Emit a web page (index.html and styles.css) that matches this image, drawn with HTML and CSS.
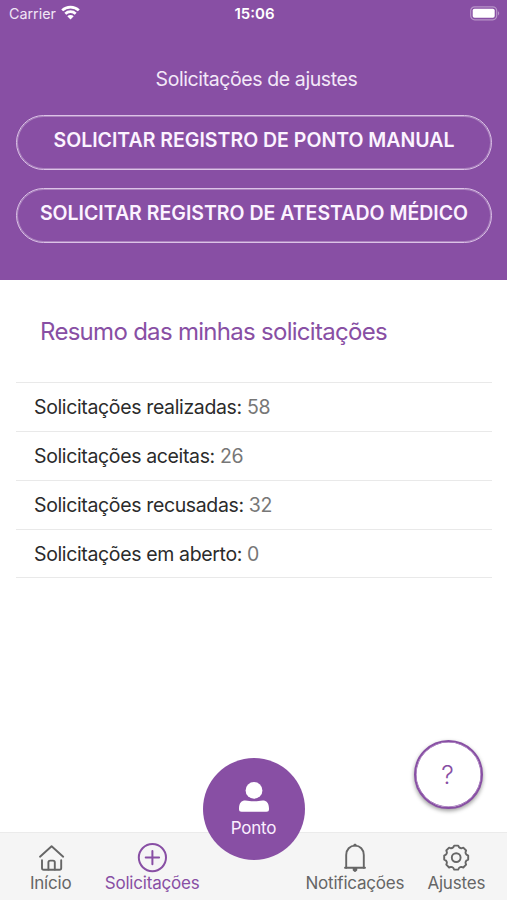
FILE: index.html
```
<!DOCTYPE html>
<html lang="pt-BR">
<head>
  <meta charset="UTF-8">
  <meta name="viewport" content="width=device-width, initial-scale=1">
  <title>Solicitações de ajustes</title>
  <link rel="stylesheet" href="styles.css">
</head>
<body>
  <header class="header">
    <div class="status-bar">
      <div class="carrier">
        <span class="carrier-name">Carrier</span>
        <svg class="wifi" width="19" height="15" viewBox="0 0 19 15">
          <g fill="none" stroke="#fff" stroke-width="2.7">
            <path d="M1.2 5.4C5.8 0.9 13.2 0.9 17.8 5.4"/>
            <path d="M4.3 8.8C7.2 6 11.8 6 14.7 8.8"/>
          </g>
          <path fill="#fff" d="M9.5 14.6L6.3 11.3C8 9.7 11 9.7 12.7 11.3Z"/>
        </svg>
      </div>
      <span class="clock">15:06</span>
      <svg class="battery" width="31" height="15" viewBox="0 0 31 15">
        <rect x="1.7" y="0.8" width="26" height="13" rx="4" fill="none" stroke="#b794c8" stroke-width="1.2"/>
        <rect x="3.7" y="2.8" width="22" height="9" rx="1.8" fill="#fff"/>
        <path fill="#b794c8" d="M29 5.2C30.6 5.8 30.6 8.8 29 9.4Z"/>
      </svg>
    </div>
    <h1 class="title">Solicitações de ajustes</h1>
    <div class="actions">
      <button class="action" type="button">SOLICITAR REGISTRO DE PONTO MANUAL</button>
      <button class="action" type="button">SOLICITAR REGISTRO DE ATESTADO MÉDICO</button>
    </div>
  </header>

  <main class="content">
    <h2 class="subtitle">Resumo das minhas solicitações</h2>
    <ul class="summary">
      <li>Solicitações realizadas: <span class="value">58</span></li>
      <li>Solicitações aceitas: <span class="value">26</span></li>
      <li>Solicitações recusadas: <span class="value">32</span></li>
      <li>Solicitações em aberto: <span class="value">0</span></li>
    </ul>
  </main>

  <button class="help" type="button">?</button>

  <nav class="tabs">
    <a class="tab">
      <svg width="30" height="30" viewBox="0 0 30 30" fill="none" stroke="currentColor" stroke-width="1.9" stroke-linecap="round" stroke-linejoin="round">
        <path d="M4 13.7L15.6 3.2L27.2 13.7"/>
        <path d="M6 17.3V25Q6 26.8 7.8 26.8H23.4Q25.2 26.8 25.2 25V17.3"/>
        <path d="M12.4 26.6V19.4Q12.4 17.6 14.2 17.6H17Q18.8 17.6 18.8 19.4V26.6"/>
      </svg>
      <span>Início</span>
    </a>
    <a class="tab active">
      <svg width="30" height="30" viewBox="0 0 30 30" fill="none" stroke="currentColor" stroke-width="2" stroke-linecap="round">
        <circle cx="15.4" cy="14.6" r="13.6"/>
        <path d="M15.4 7.9V21.3M8.7 14.6H22.1"/>
      </svg>
      <span>Solicitações</span>
    </a>
    <div class="tab tab-center">
      <a class="ponto">
        <svg width="30" height="30" viewBox="0 0 30 30" fill="#fff">
          <circle cx="15" cy="8.4" r="8.4"/>
          <path d="M0 26.5C0 21 2.5 18.4 6.3 18.4C9.5 18.4 11 19.3 15 19.3C19 19.3 20.5 18.4 23.7 18.4C27.5 18.4 30 21 30 26.5V27.3Q30 29.8 27.5 29.8H2.5Q0 29.8 0 27.3Z"/>
        </svg>
        <span>Ponto</span>
      </a>
    </div>
    <a class="tab">
      <svg width="30" height="30" viewBox="0 0 30 30" fill="none" stroke="currentColor" stroke-width="1.9" stroke-linecap="round" stroke-linejoin="round">
        <path d="M6.2 24.8V12C6.2 6.6 10 2.6 15 2.6C20 2.6 23.8 6.6 23.8 12V24.8"/>
        <path d="M5 24.8H25"/>
        <path fill="currentColor" d="M14.5 1.6H15.5V2.4H14.5ZM13.7 25.5H16.3V26.9L15 28L13.7 26.9Z"/>
      </svg>
      <span>Notificações</span>
    </a>
    <a class="tab">
      <svg width="30" height="30" viewBox="-15.2 -14.6 30 30" fill="none" stroke="currentColor" stroke-width="1.9" stroke-linejoin="round">
        <path d="M-2 -12H2L2.9 -10.3Q4 -9.3 5.2 -9.3L7.1 -9.9L9.9 -7.1L9.3 -5.2Q9.3 -4 10.3 -2.9L12 -2V2L10.3 2.9Q9.3 4 9.3 5.2L9.9 7.1L7.1 9.9L5.2 9.3Q4 9.3 2.9 10.3L2 12H-2L-2.9 10.3Q-4 9.3 -5.2 9.3L-7.1 9.9L-9.9 7.1L-9.3 5.2Q-9.3 4 -10.3 2.9L-12 2V-2L-10.3 -2.9Q-9.3 -4 -9.3 -5.2L-9.9 -7.1L-7.1 -9.9L-5.2 -9.3Q-4 -9.3 -2.9 -10.3Z"/>
        <circle r="4.4"/>
      </svg>
      <span>Ajustes</span>
    </a>
  </nav>
</body>
</html>
```
FILE: styles.css
```
* {
  box-sizing: border-box;
}

body {
  display: flex;
  flex-direction: column;
  height: 900px;
  margin: 0;
  background-color: #fff;
  color: #2b2b2b;
  font-family: Inter, "Liberation Sans", sans-serif;
  overflow: hidden;
}

button {
  font-family: inherit;
}

.header {
  height: 280px;
  padding: 0 15px 0 16px;
  background-color: #884fa4;
  color: #fff;
}

.status-bar {
  display: grid;
  grid-template-columns: 1fr auto 1fr;
  align-items: center;
  height: 28px;
  margin: 0 -8px 0 -7px;
}

.carrier {
  display: flex;
  align-items: center;
  gap: 5px;
  margin-top: -1px;
  color: #f1e5f6;
  font-size: 14.3px;
}

.wifi {
  margin-top: -2px;
}

.clock {
  margin-top: -1px;
  font-size: 15px;
  font-weight: 600;
}

.battery {
  justify-self: end;
  margin-top: -2px;
}

.title {
  margin: 38px 0 0;
  padding-left: 5px;
  color: #f3e8f8;
  font-size: 19.5px;
  font-weight: 400;
  letter-spacing: -0.4px;
  line-height: 27px;
  text-align: center;
}

.actions {
  display: flex;
  flex-direction: column;
  gap: 18px;
  margin-top: 22px;
}

.action {
  height: 55px;
  padding: 0 0 5px;
  border: 1px solid #dcc3e7;
  border-radius: 28px;
  background: none;
  box-shadow: inset 0 0 0 1px rgba(255, 255, 255, 0.3);
  color: #fcf3ff;
  font-size: 19.5px;
  font-weight: 600;
  white-space: nowrap;
}

.content {
  flex: 1;
  padding: 36px 15px 0 16px;
}

.subtitle {
  margin: 0 24px;
  color: #884fa4;
  font-size: 24px;
  font-weight: 400;
  letter-spacing: -0.71px;
  line-height: 32px;
}

.summary {
  margin: 34px 0 0;
  padding: 0;
  border-top: 1px solid #e9e9e9;
  list-style: none;
}

.summary li {
  height: 48.85px;
  padding-left: 18px;
  border-bottom: 1px solid #e9e9e9;
  font-size: 19.5px;
  letter-spacing: -0.36px;
  line-height: 49px;
}

.value {
  color: #777;
}

.help {
  position: absolute;
  top: 740px;
  left: 414px;
  width: 69px;
  height: 69px;
  padding: 0 2px 0 0;
  border: 2px solid #884fa4;
  border-radius: 50%;
  background-color: #fff;
  box-shadow: 0 2px 4px rgba(0, 0, 0, 0.4), inset 0 0 0 0.5px #884fa4;
  color: #884fa4;
  font-size: 25px;
  font-weight: 300;
}

.tabs {
  display: grid;
  grid-template-columns: repeat(5, 1fr);
  height: 68px;
  border-top: 1px solid #ebebeb;
  background-color: #f5f5f5;
}

.tab {
  display: flex;
  flex-direction: column;
  align-items: center;
  min-width: 0;
  padding-top: 10px;
  color: #666;
  font-size: 17px;
  letter-spacing: -0.2px;
  line-height: 20px;
  white-space: nowrap;
}

.tab svg {
  flex-shrink: 0;
}

.active {
  color: #884fa4;
}

.tab-center {
  padding: 0;
}

.ponto {
  display: flex;
  flex-direction: column;
  flex-shrink: 0;
  align-items: center;
  gap: 6px;
  width: 102px;
  height: 102px;
  margin-top: -75px;
  padding-top: 24px;
  border-radius: 50%;
  background-color: #884fa4;
  color: #fbeeff;
}
```
